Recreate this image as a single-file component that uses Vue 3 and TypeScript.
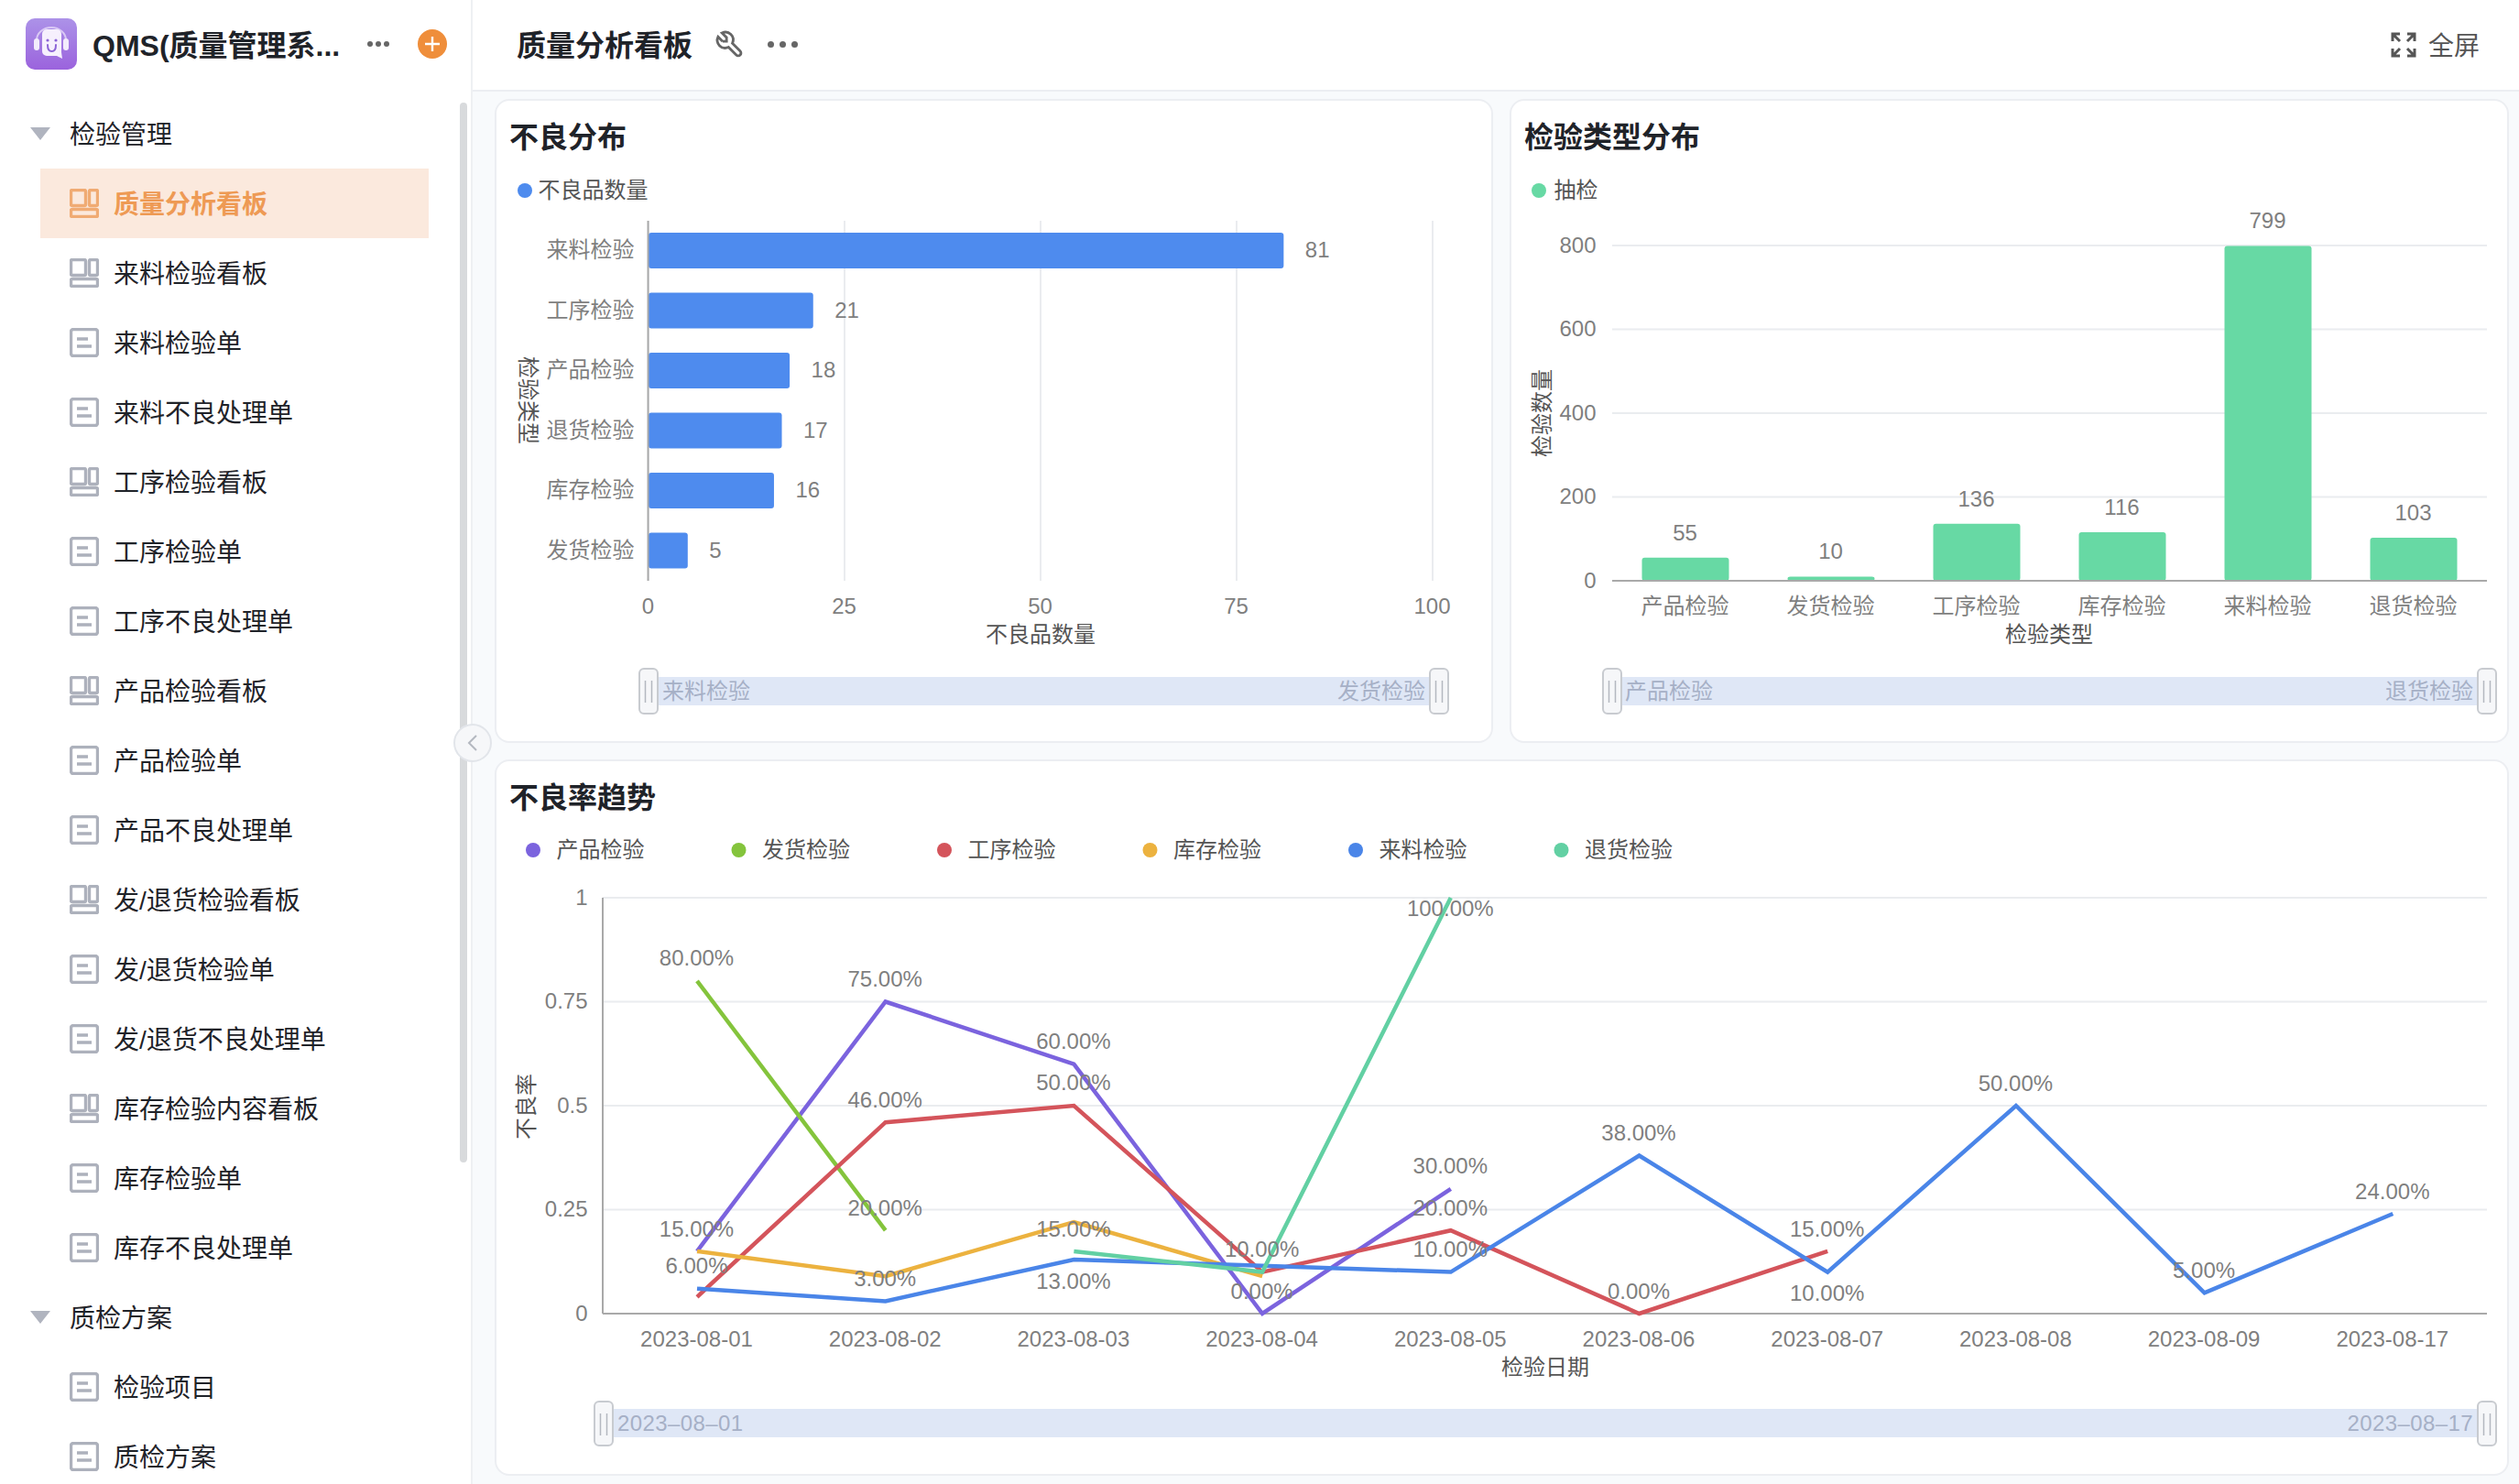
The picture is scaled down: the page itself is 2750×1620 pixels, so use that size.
<template>
  <div class="app">
    <aside class="sidebar">
      <div class="brand">
        <svg class="logo" width="56" height="56" viewBox="0 0 56 56">
          <defs>
            <linearGradient id="logoBg" x1="0" y1="0" x2="0" y2="1">
              <stop offset="0" stop-color="#ac92e8" />
              <stop offset="1" stop-color="#9b63dd" />
            </linearGradient>
          </defs>
          <rect width="56" height="56" rx="10" fill="url(#logoBg)" />
          <path d="M12 24a16 14 0 0 1 32 0" fill="none" stroke="#d9c8f5" stroke-width="2" />
          <rect x="9" y="22" width="6" height="13" rx="3" fill="#f3ecfc" />
          <rect x="41" y="22" width="6" height="13" rx="3" fill="#f3ecfc" />
          <path d="M23 12h11a5 5 0 0 1 5 5v20l1 7-6-3H23a5 5 0 0 1-5-5V17a5 5 0 0 1 5-5z" fill="#f6f0fd" />
          <circle cx="24" cy="24" r="1.6" fill="#8b63d6" />
          <circle cx="33" cy="24" r="1.6" fill="#8b63d6" />
          <path d="M24 29q0 7 4.500 7t4.500-7" fill="none" stroke="#8b63d6" stroke-width="2" stroke-linecap="round" />
        </svg>
        <span class="brand-name">QMS(质量管理系...</span>
        <span class="dots brand-dots"><i></i><i></i><i></i></span>
        <svg class="add" width="32" height="32" viewBox="0 0 32 32">
          <circle cx="16" cy="16" r="16" fill="#ef8e3b" />
          <path d="M16 8v16M8 16h16" stroke="#fff" stroke-width="2.4" />
        </svg>
      </div>
      <div class="menu">
        <div v-for="row in menu" :key="row.label + row.type" class="menu-row" :class="row.type">
          <span v-if="row.type === 'group'" class="caret"></span>
          <svg v-else-if="row.icon === 'board'" class="menu-icon" width="32" height="32" viewBox="0 0 32 32">
            <rect x="1.5" y="1.5" width="16" height="17" rx="1.5" />
            <rect x="21.5" y="1.5" width="9" height="17" rx="1.5" />
            <rect x="1.5" y="22.5" width="29" height="8" rx="1.5" />
          </svg>
          <svg v-else class="menu-icon" width="32" height="32" viewBox="0 0 32 32">
            <rect x="1.5" y="1.5" width="29" height="29" rx="2.5" />
            <path d="M8 12h12M8 20h16" />
          </svg>
          <span class="menu-label">{{ row.label }}</span>
        </div>
      </div>
      <span class="scroll-thumb"></span>
      <span class="collapse">
        <svg width="14" height="20" viewBox="0 0 14 20"><path d="M11 2 3 10l8 8" /></svg>
      </span>
    </aside>

    <main class="main">
      <header class="topbar">
        <h1>质量分析看板</h1>
        <svg class="wrench" width="34" height="34" viewBox="0 0 24 24">
          <path d="M7 10h3v-3l-3.5-3.5a6 6 0 0 1 8 8l6 6a2 2 0 0 1-3 3l-6-6a6 6 0 0 1-8-8l3.5 3.5" />
        </svg>
        <span class="dots top-dots"><i></i><i></i><i></i></span>
        <div class="fullscreen">
          <svg width="28" height="28" viewBox="0 0 28 28">
            <path d="M2 10V2h8M18 2h8v8M26 18v8h-8M10 26H2v-8M3 3l7 7M25 3l-7 7M25 25l-7-7M3 25l7-7" />
          </svg>
          <span>全屏</span>
        </div>
      </header>

      <section class="board">
        <article class="card">
          <h2>不良分布</h2>
          <svg class="chart" viewBox="542 172 1086 637">
            <circle cx="573" cy="208" r="8" fill="#4e8bee" />
            <text x="588" y="216.500" class="tick dark">不良品数量</text>
            <line v-for="t in defectTicks" :key="t" :x1="defectX(t)" :x2="defectX(t)" y1="241" y2="634" class="grid" />
            <template v-for="(b, i) in defects" :key="b.name">
              <rect x="708" :y="254 + i * 65.500" :width="b.value * 8.56" height="39" rx="3" fill="#4e8bee" />
              <text x="693" :y="282 + i * 65.500" text-anchor="end" class="tick">{{ b.name }}</text>
              <text :x="defectX(b.value) + 24" :y="282 + i * 65.500" class="tick">{{ b.value }}</text>
            </template>
            <line x1="707.500" x2="707.500" y1="241" y2="634" class="axis" />
            <text v-for="t in defectTicks" :key="t" :x="defectX(t)" y="671" text-anchor="middle" class="tick">{{ t }}</text>
            <text x="1136" y="701" text-anchor="middle" class="title">不良品数量</text>
            <text transform="translate(568 437) rotate(90)" text-anchor="middle" class="title">检验类型</text>
            <rect x="708" y="739" width="863" height="31" fill="#dfe7f6" />
            <text x="723" y="763" class="brush">来料检验</text>
            <text x="1556" y="763" text-anchor="end" class="brush">发货检验</text>
            <g v-for="x in [708, 1571]" :key="x">
              <rect :x="x - 10" y="730" width="20" height="49" rx="5" class="handle" />
              <path :d="`M${x - 3.5} 743v24M${x + 3.5} 743v24`" class="grip" />
            </g>
          </svg>
        </article>

        <article class="card">
          <h2>检验类型分布</h2>
          <svg class="chart" viewBox="1650 172 1087 637">
            <circle cx="1680" cy="208" r="8" fill="#67d9a4" />
            <text x="1697" y="216.500" class="tick dark">抽检</text>
            <line v-for="t in [200, 400, 600, 800]" :key="t" x1="1760" x2="2715" :y1="typeY(t)" :y2="typeY(t)" class="grid" />
            <text v-for="t in [0, 200, 400, 600, 800]" :key="t" x="1743" :y="typeY(t) + 8.500" text-anchor="end" class="tick">{{ t }}</text>
            <template v-for="(b, i) in types" :key="b.name">
              <rect :x="1792.500 + i * 159" :y="typeY(b.value)" width="95" :height="b.value * 0.4575" rx="3" fill="#67d9a4" />
              <text :x="1840 + i * 159" y="671" text-anchor="middle" class="tick">{{ b.name }}</text>
              <text :x="1840 + i * 159" :y="typeY(b.value) - 18" text-anchor="middle" class="tick">{{ b.value }}</text>
            </template>
            <line x1="1760" x2="2715" y1="634" y2="634" class="axis" />
            <text x="2237" y="701" text-anchor="middle" class="title">检验类型</text>
            <text transform="translate(1692 451) rotate(-90)" text-anchor="middle" class="title">检验数量</text>
            <rect x="1760" y="739" width="955" height="31" fill="#dfe7f6" />
            <text x="1774" y="763" class="brush">产品检验</text>
            <text x="2700" y="763" text-anchor="end" class="brush">退货检验</text>
            <g v-for="x in [1760, 2715]" :key="x">
              <rect :x="x - 10" y="730" width="20" height="49" rx="5" class="handle" />
              <path :d="`M${x - 3.5} 743v24M${x + 3.5} 743v24`" class="grip" />
            </g>
          </svg>
        </article>

        <article class="card wide">
          <h2>不良率趋势</h2>
          <svg class="chart" viewBox="542 893 2195 716">
            <g v-for="(s, i) in series" :key="s.name">
              <circle :cx="582 + i * 224.500" cy="928" r="8" :fill="s.color" />
              <text :x="608 + i * 224.500" y="936.500" class="tick dark">{{ s.name }}</text>
            </g>
            <line v-for="t in [0.25, 0.5, 0.75, 1]" :key="t" x1="658" x2="2715" :y1="rateY(t)" :y2="rateY(t)" class="grid" />
            <text v-for="t in [0, 0.25, 0.5, 0.75, 1]" :key="t" x="642" :y="rateY(t) + 8.500" text-anchor="end" class="tick">{{ t }}</text>
            <line x1="658" x2="658" y1="980" y2="1434" class="axis" />
            <line x1="658" x2="2715" y1="1434" y2="1434" class="axis" />
            <polyline v-for="s in series" :key="s.name" :points="linePoints(s.points)" :stroke="s.color" class="line" />
            <text v-for="l in rateLabels" :key="l.text + l.day + l.y" :x="dayX(l.day)" :y="l.y + 8.500" text-anchor="middle" class="tick">{{ l.text }}</text>
            <text v-for="(d, i) in days" :key="d" :x="dayX(i)" y="1471" text-anchor="middle" class="tick">{{ d }}</text>
            <text x="1687" y="1501" text-anchor="middle" class="title">检验日期</text>
            <text transform="translate(583 1208) rotate(-90)" text-anchor="middle" class="title">不良率</text>
            <rect x="659" y="1538" width="2056" height="31" fill="#dfe7f6" />
            <text x="674" y="1562" class="brush date">2023–08–01</text>
            <text x="2700" y="1562" text-anchor="end" class="brush date">2023–08–17</text>
            <g v-for="x in [659, 2715]" :key="x">
              <rect :x="x - 10" y="1530" width="20" height="48" rx="5" class="handle" />
              <path :d="`M${x - 3.5} 1543v24M${x + 3.5} 1543v24`" class="grip" />
            </g>
          </svg>
        </article>
      </section>
    </main>
  </div>
</template>

<script setup lang="ts">
interface MenuRow {
  label: string;
  type: 'group' | 'item' | 'item active';
  icon?: 'board' | 'doc';
}

interface Series {
  name: string;
  color: string;
  points: [number, number][];
}

const item = (label: string, icon: 'board' | 'doc' = 'doc'): MenuRow => ({ label, type: 'item', icon });

const menu: MenuRow[] = [
  { label: '检验管理', type: 'group' },
  { label: '质量分析看板', type: 'item active', icon: 'board' },
  item('来料检验看板', 'board'),
  item('来料检验单'),
  item('来料不良处理单'),
  item('工序检验看板', 'board'),
  item('工序检验单'),
  item('工序不良处理单'),
  item('产品检验看板', 'board'),
  item('产品检验单'),
  item('产品不良处理单'),
  item('发/退货检验看板', 'board'),
  item('发/退货检验单'),
  item('发/退货不良处理单'),
  item('库存检验内容看板', 'board'),
  item('库存检验单'),
  item('库存不良处理单'),
  { label: '质检方案', type: 'group' },
  item('检验项目'),
  item('质检方案'),
];

const defectTicks = [0, 25, 50, 75, 100];
const defects = [
  { name: '来料检验', value: 81 },
  { name: '工序检验', value: 21 },
  { name: '产品检验', value: 18 },
  { name: '退货检验', value: 17 },
  { name: '库存检验', value: 16 },
  { name: '发货检验', value: 5 },
];
const types = [
  { name: '产品检验', value: 55 },
  { name: '发货检验', value: 10 },
  { name: '工序检验', value: 136 },
  { name: '库存检验', value: 116 },
  { name: '来料检验', value: 799 },
  { name: '退货检验', value: 103 },
];

const days = ['2023-08-01', '2023-08-02', '2023-08-03', '2023-08-04', '2023-08-05', '2023-08-06', '2023-08-07', '2023-08-08', '2023-08-09', '2023-08-17'];

const series: Series[] = [
  { name: '产品检验', color: '#7b63de', points: [[0, 0.15], [1, 0.75], [2, 0.6], [3, 0], [4, 0.3]] },
  { name: '发货检验', color: '#84c43c', points: [[0, 0.8], [1, 0.2]] },
  { name: '工序检验', color: '#d4545b', points: [[0, 0.04], [1, 0.46], [2, 0.5], [3, 0.1], [4, 0.2], [5, 0], [6, 0.15]] },
  { name: '库存检验', color: '#ecb23f', points: [[0, 0.15], [1, 0.09], [2, 0.22], [3, 0.09]] },
  { name: '来料检验', color: '#4a85e8', points: [[0, 0.06], [1, 0.03], [2, 0.13], [3, 0.115], [4, 0.1], [5, 0.38], [6, 0.1], [7, 0.5], [8, 0.05], [9, 0.24]] },
  { name: '退货检验', color: '#62d0a3', points: [[2, 0.15], [3, 0.1], [4, 1]] },
];

const rateLabels = [
  { day: 0, y: 1046, text: '80.00%' },
  { day: 0, y: 1342, text: '15.00%' },
  { day: 0, y: 1382, text: '6.00%' },
  { day: 1, y: 1069, text: '75.00%' },
  { day: 1, y: 1201, text: '46.00%' },
  { day: 1, y: 1319, text: '20.00%' },
  { day: 1, y: 1396, text: '3.00%' },
  { day: 2, y: 1137, text: '60.00%' },
  { day: 2, y: 1182, text: '50.00%' },
  { day: 2, y: 1342, text: '15.00%' },
  { day: 2, y: 1399, text: '13.00%' },
  { day: 3, y: 1364, text: '10.00%' },
  { day: 3, y: 1410, text: '0.00%' },
  { day: 4, y: 992, text: '100.00%' },
  { day: 4, y: 1273, text: '30.00%' },
  { day: 4, y: 1319, text: '20.00%' },
  { day: 4, y: 1364, text: '10.00%' },
  { day: 5, y: 1237, text: '38.00%' },
  { day: 5, y: 1410, text: '0.00%' },
  { day: 6, y: 1342, text: '15.00%' },
  { day: 6, y: 1412, text: '10.00%' },
  { day: 7, y: 1183, text: '50.00%' },
  { day: 8, y: 1387, text: '5.00%' },
  { day: 9, y: 1301, text: '24.00%' },
];

const defectX = (v: number) => 708 + v * 8.56;
const typeY = (v: number) => 634 - v * 0.4575;
const rateY = (v: number) => 1434 - v * 454;
const dayX = (i: number) => 761 + i * 205.7;
const linePoints = (pts: [number, number][]) => pts.map(([d, v]) => `${dayX(d)},${rateY(v)}`).join(' ');
</script>

<style>
html,
body {
  margin: 0;
  height: 100%;
  overflow: hidden;
  background: #fff;
}
</style>

<style scoped>
.app {
  display: flex;
  height: 100vh;
  font-family: "Liberation Sans", "Noto Sans CJK SC", sans-serif;
  color: #1f2329;
}

.sidebar {
  position: relative;
  flex: 0 0 514px;
  border-right: 2px solid #eef0f3;
  background: #fff;
}

.brand {
  display: flex;
  align-items: center;
  height: 96px;
  padding-left: 28px;
}

.brand-name {
  margin-left: 17px;
  width: 300px;
  padding-bottom: 2px;
  font-size: 32px;
  font-weight: 600;
  white-space: nowrap;
}

.dots {
  display: flex;
  gap: 6px;
}

.dots i {
  width: 7px;
  height: 7px;
  border-radius: 50%;
  background: #666;
}

.brand-dots {
  gap: 3px;
}

.brand-dots i {
  width: 6px;
  height: 6px;
}

.add {
  margin-left: 31px;
}

.menu {
  padding-top: 12px;
}

.menu-row {
  display: flex;
  align-items: center;
  height: 76px;
  font-size: 28px;
  white-space: nowrap;
}

.menu-label {
  padding-bottom: 3px;
}

.menu-row.group {
  padding-left: 33px;
}

.menu-row.item {
  width: 424px;
  margin-left: 44px;
  padding-left: 32px;
  box-sizing: border-box;
}

.menu-row.active {
  background: #fbe9dd;
  color: #ee9a54;
  font-weight: 600;
}

.caret {
  width: 0;
  height: 0;
  margin-right: 21px;
  border-left: 11px solid transparent;
  border-right: 11px solid transparent;
  border-top: 14px solid #b0b4bf;
}

.menu-icon {
  flex: none;
  margin-right: 16px;
  fill: none;
  stroke: #adb1bc;
  stroke-width: 3.4;
}

.active .menu-icon {
  stroke: #f0ab73;
}

.scroll-thumb {
  position: absolute;
  top: 112px;
  left: 502px;
  width: 8px;
  height: 1157px;
  border-radius: 4px;
  background: #d8dadc;
}

.collapse {
  position: absolute;
  top: 790px;
  left: 495px;
  display: flex;
  align-items: center;
  justify-content: center;
  width: 38px;
  height: 38px;
  border: 2px solid #e2e5ea;
  border-radius: 50%;
  background: #f6f7f9;
}

.collapse path {
  fill: none;
  stroke: #b4b8c0;
  stroke-width: 2;
}

.main {
  flex: 1;
  display: flex;
  flex-direction: column;
  min-width: 0;
  background: #f8fafc;
}

.topbar {
  display: flex;
  align-items: center;
  height: 96px;
  padding: 0 43px 2px 48px;
  border-bottom: 2px solid #eceef2;
  background: #fff;
}

.topbar h1 {
  margin: 0;
  padding-bottom: 3px;
  font-size: 32px;
  font-weight: 600;
}

.wrench {
  margin-left: 23px;
  fill: none;
  stroke: #666;
  stroke-width: 2;
}

.top-dots {
  margin-left: 25px;
}

.fullscreen {
  display: flex;
  align-items: center;
  gap: 13px;
  margin-left: auto;
  margin-top: 2px;
  font-size: 28px;
  color: #555;
}

.fullscreen span {
  padding-bottom: 2px;
}

.fullscreen path {
  fill: none;
  stroke: #555;
  stroke-width: 3;
}

.board {
  flex: 1;
  display: grid;
  grid-template-columns: 1090px 1091px;
  grid-template-rows: 703px 782px;
  gap: 18px;
  padding: 8px 11px 9px 24px;
  min-height: 0;
}

.card {
  display: flex;
  flex-direction: column;
  min-height: 0;
  border: 2px solid #eceef2;
  border-radius: 16px;
  background: #fff;
}

.card.wide {
  grid-column: 1 / 3;
}

.card h2 {
  margin: 18px 0 0 14px;
  font-size: 32px;
  line-height: 44px;
  font-weight: 600;
}

.chart {
  display: block;
  flex: 1;
  width: 100%;
  min-height: 0;
}

.tick {
  font-size: 24px;
  fill: #7f7f7f;
  transform: translate(-0.5px, -1px);
}

.tick.dark,
.title {
  fill: #555;
}

.title {
  font-size: 24px;
}

.brush {
  font-size: 24px;
  fill: #a6b0c6;
}

.brush.date {
  letter-spacing: 0.4px;
}

.grid {
  stroke: #eaecef;
  stroke-width: 2;
}

.axis {
  stroke: #a9a9a9;
  stroke-width: 2;
}

.line {
  fill: none;
  stroke-width: 4.5;
}

.handle {
  fill: #f6f7f9;
  stroke: #c8cbd0;
  stroke-width: 2;
}

.grip {
  fill: none;
  stroke: #b4b8c0;
  stroke-width: 1.500;
}
</style>
